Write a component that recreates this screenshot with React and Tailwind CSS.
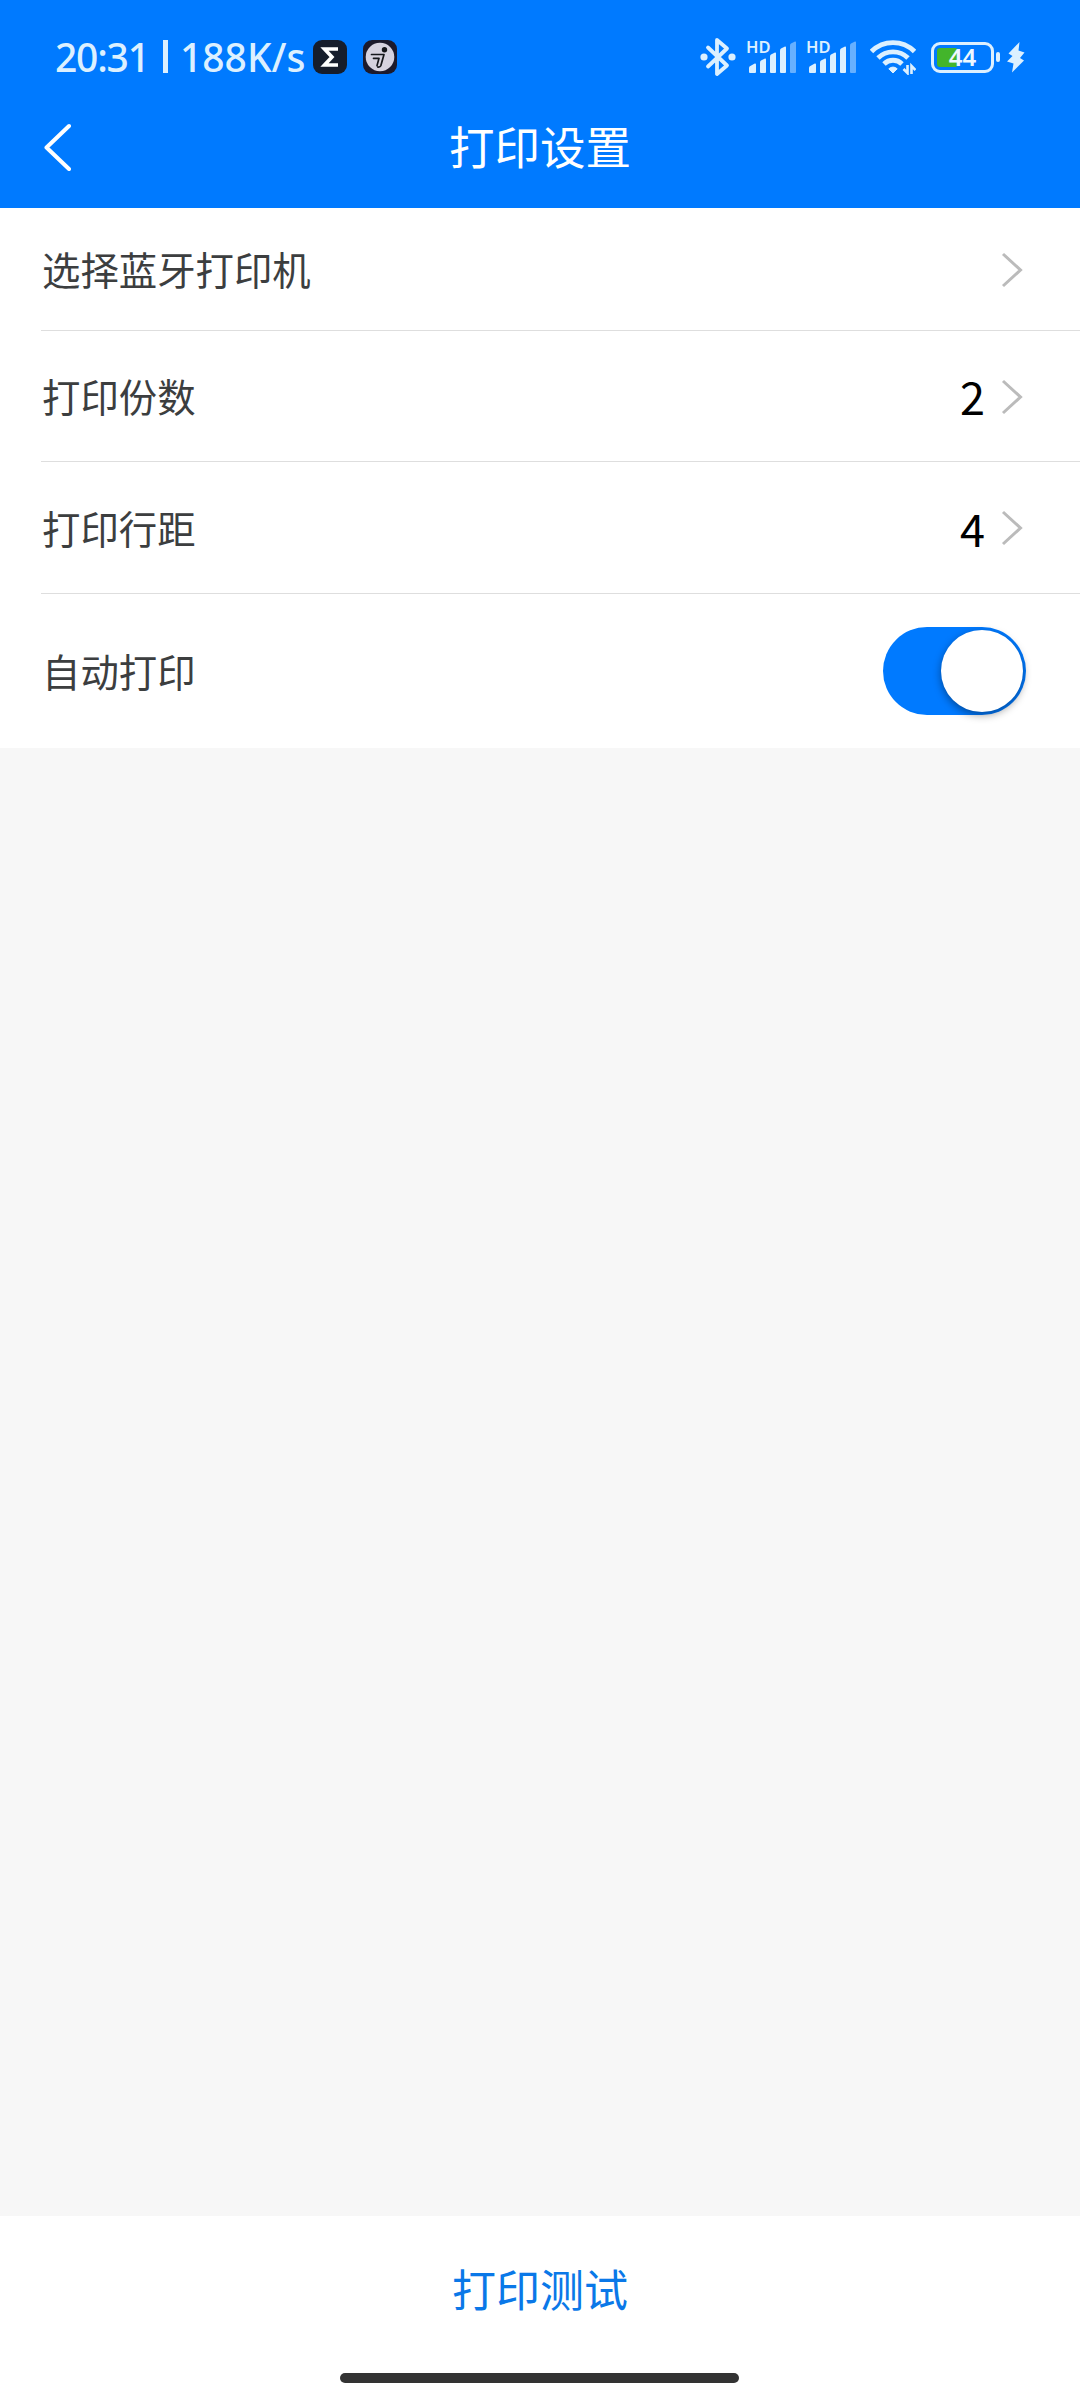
import React from "react";

function BluetoothIcon() {
  return (
    <svg className="block h-10 w-9" viewBox="0 0 36 40" fill="none">
      <path
        d="M8 10.5 27 28.5 17 37V3l10 8.5L8 29.5"
        stroke="#dcf0ff"
        strokeWidth="3.8"
        strokeLinejoin="round"
        strokeLinecap="round"
      />
      <circle cx="4" cy="20" r="3.6" fill="#dcf0ff" />
      <circle cx="32" cy="20" r="3.6" fill="#dcf0ff" />
    </svg>
  );
}

function SignalIcon() {
  return (
    <div className="relative h-9 w-[50px]">
      <span className="absolute top-0 -left-px text-[16.500px] leading-[16px] font-semibold text-[#dcf0ff]">
        HD
      </span>
      <svg className="block h-9 w-[50px]" viewBox="0 0 50 36">
        <g fill="#dcf0ff">
          <path d="M2 29q0-1.500 1.300-2l4.500-2.500q1.200-.3 1.200 1V33q0 1-1 1H3q-1 0-1-1z" />
          <path d="M13 23.500q0-1.300 1-2l4-2q1-.3 1 1V33q0 1-1 1h-4q-1 0-1-1z" />
          <path d="M23 17.500q0-1.300 1-2l4-2q1-.3 1 1V33q0 1-1 1h-4q-1 0-1-1z" />
          <path d="M33 11.500q0-1.300 1-2l4-2q1-.3 1 1V33q0 1-1 1h-4q-1 0-1-1z" />
        </g>
        <path d="M43 6.500q0-1.300 1-2l4-2q1-.3 1 1V33q0 1-1 1h-4q-1 0-1-1z" fill="#66b0ff" />
      </svg>
    </div>
  );
}

function WifiIcon() {
  return (
    <svg className="block h-9 w-[46px]" viewBox="0 0 46 36" fill="none">
      <g stroke="#dcf0ff" strokeWidth="4.800">
        <path d="M1.500 12.500a30.500 30.500 0 0 1 43 0" />
        <path d="M8 19a21.300 21.300 0 0 1 30 0" />
        <path d="M14 25a12.700 12.700 0 0 1 18 0" />
      </g>
      <path d="M23 34l-4.200-4.200a6 6 0 0 1 8.400 0z" fill="#dcf0ff" stroke="#dcf0ff" strokeWidth="1" strokeLinejoin="round" />
      <path d="M37.500 25.500V35l-5-4.600M40.700 35v-9.500l4.300 4.600" stroke="#007aff" strokeWidth="5" />
      <path d="M37.500 26v8l-4-4M41.500 35v-8l4 4" stroke="#dcf0ff" strokeWidth="2.600" />
    </svg>
  );
}

function BatteryIcon() {
  return (
    <div className="flex items-center gap-[2px]">
      <div className="relative h-[31px] w-[63px] rounded-[9px] border-[3px] border-[#dcf0ff] p-[3px]">
        <div className="h-full w-[21px] rounded-[3px] bg-[#43b52b]" />
        <span className="absolute inset-0 flex items-center justify-center text-[24px] leading-none font-semibold text-[#eef8ff]">
          44
        </span>
      </div>
      <div className="h-[10px] w-1 rounded-full bg-[#dcf0ff]" />
    </div>
  );
}

function BoltIcon() {
  return (
    <svg className="block h-8 w-[18px]" viewBox="0 0 18 32">
      <path
        d="M12.500 1 1.500 12.500l4 2.500L0 20.500l6.500 2-1.500 9L17 19.500l-4-2.500 4.500-5.500-6-2z"
        fill="#dcf0ff"
      />
    </svg>
  );
}

function SigmaAppIcon() {
  return (
    <svg className="block size-[34px]" viewBox="0 0 34 34">
      <rect width="34" height="34" rx="9" fill="#161d2c" />
      <path d="M25 9H11.500l7.500 8-7.500 8H25" fill="none" stroke="#fff" strokeWidth="3.600" />
    </svg>
  );
}

function RunnerAppIcon() {
  return (
    <svg className="block size-[34px]" viewBox="0 0 34 34" fill="none">
      <rect width="34" height="34" rx="9" fill="#1c1a2c" />
      <circle cx="17" cy="17" r="14.300" fill="#d6d2df" />
      <circle cx="21.500" cy="9.800" r="2.700" fill="#15161c" />
      <path d="M8.500 14.500h12.500l-3.200 11.300q-.6 1.500-3 1.200M10.500 18.300h5.500l-2 7.300" stroke="#15161c" strokeWidth="1.700" strokeLinecap="round" strokeLinejoin="round" />
    </svg>
  );
}

function StatusBar() {
  return (
    <div className="flex h-[114px] items-center pr-[55px] pl-[55px] font-['Noto_Sans','Noto_Sans_CJK_SC',sans-serif]">
      <div className="-mt-px flex w-[258px] items-center text-[39px] leading-none font-medium whitespace-nowrap text-[#dcf0ff]">
        <span className="w-[108px] tracking-[-1.200px]">20:31</span>
        <span className="h-[33px] w-[5px] bg-[#dcf0ff]" />
        <span className="ml-[12px]">188K/s</span>
      </div>
      <SigmaAppIcon />
      <div className="w-4" />
      <RunnerAppIcon />
      <div className="ml-auto flex items-center">
        <BluetoothIcon />
        <div className="ml-[11px]">
          <SignalIcon />
        </div>
        <div className="ml-[10px]">
          <SignalIcon />
        </div>
        <div className="ml-[13px]">
          <WifiIcon />
        </div>
        <div className="ml-[15px]">
          <BatteryIcon />
        </div>
        <div className="ml-[7px]">
          <BoltIcon />
        </div>
      </div>
    </div>
  );
}

function TitleBar() {
  return (
    <div className="grid h-[94px] grid-cols-[1fr_auto_1fr] items-center">
      <button className="ml-[43px] mt-[-28px] w-7" aria-label="返回">
        <svg className="block h-[48px] w-7" viewBox="0 0 28 48" fill="none">
          <path d="M26 3 3.500 24.500 26 46" stroke="#fff" strokeWidth="4" strokeLinecap="round" strokeLinejoin="round" />
        </svg>
      </button>
      <h1 className="mt-[-31px] text-[45.500px] leading-none text-white">打印设置</h1>
    </div>
  );
}

function Chevron() {
  return (
    <svg className="mt-px block h-9 w-[22px]" viewBox="0 0 22 36" fill="none">
      <path d="M2 2 19.500 18 2 34" stroke="#bbb" strokeWidth="3" />
    </svg>
  );
}

function Row({ label, value, className }) {
  return (
    <div className={`ml-[41px] flex items-center border-b border-[#dedede] pr-[57px] ${className}`}>
      <span className="-mt-px grow pl-px text-[38.400px] leading-none text-[#3c3e3f]">{label}</span>
      {value && <span className="-mt-px mr-[16px] text-[45px] leading-none text-black">{value}</span>}
      <Chevron />
    </div>
  );
}

export default function App() {
  return (
    <div className="flex h-[2400px] w-[1080px] flex-col overflow-hidden bg-[#f7f7f7] font-['Noto_Sans_CJK_SC',sans-serif]">
      <header className="bg-[#007aff]">
        <StatusBar />
        <TitleBar />
      </header>
      <main className="bg-white">
        <Row label="选择蓝牙打印机" className="h-[123px]" />
        <Row label="打印份数" value="2" className="h-[131px]" />
        <Row label="打印行距" value="4" className="h-[132px]" />
        <div className="ml-[41px] flex h-[154px] items-center pr-[54px]">
          <span className="-mt-[2px] grow pl-px text-[38.400px] leading-none text-[#3c3e3f]">自动打印</span>
          <button
            role="switch"
            aria-checked="true"
            aria-label="自动打印"
            className="flex h-[88px] w-[143px] items-center justify-end rounded-full bg-[#007aff] pr-[3px]"
          >
            <span className="size-[82px] rounded-full bg-white shadow-[0_3px_8px_rgba(0,0,0,0.4)]" />
          </button>
        </div>
      </main>
      <footer className="mt-auto flex h-[184px] flex-col items-center bg-white pt-[50px]">
        <button className="text-[44px] leading-none text-[#0a78e8]">打印测试</button>
        <div className="mt-auto mr-[2px] mb-[17px] h-[10px] w-[399px] rounded-full bg-[#333]" />
      </footer>
    </div>
  );
}
